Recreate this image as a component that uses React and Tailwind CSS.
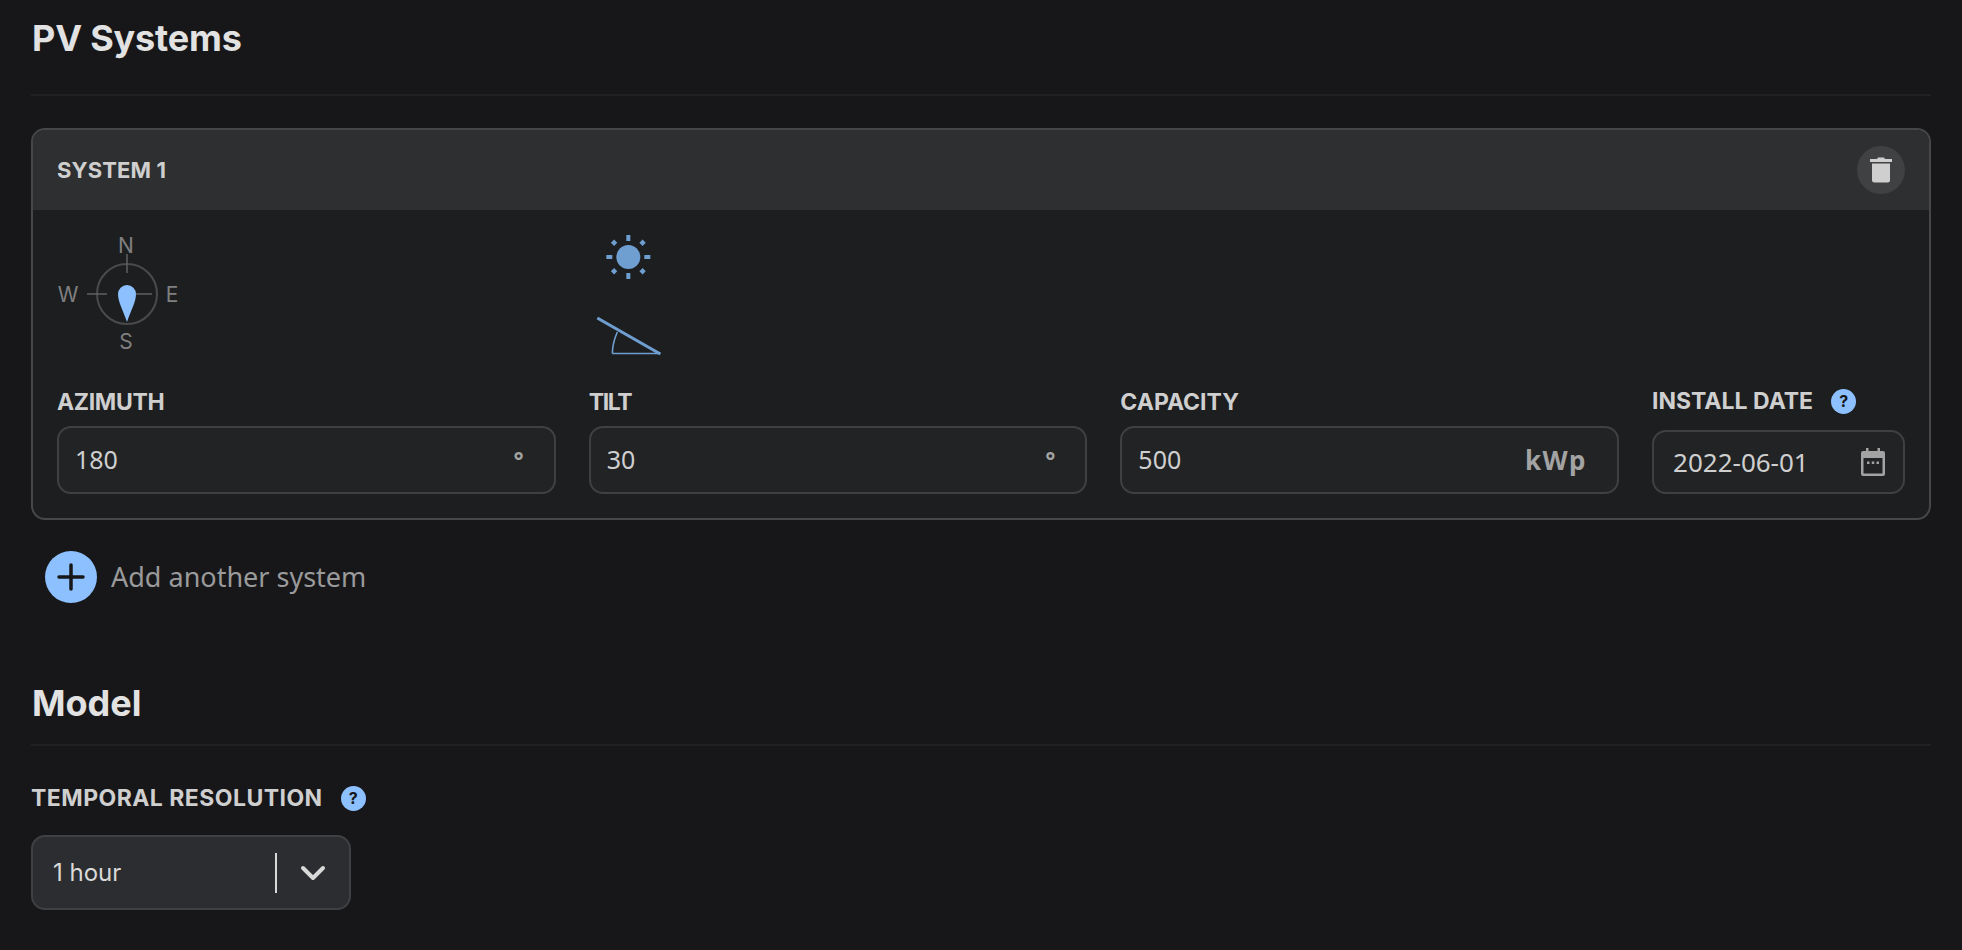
import React from "react";

const Help = () => (
  <span className="flex h-[25px] w-[25px] shrink-0 items-center justify-center rounded-full bg-[#8cc0ff] font-['Inter'] text-[16px] font-bold leading-none text-[#17171a]">?</span>
);

const Label = ({ children, className = "" }) => (
  <div className={"font-['Inter'] text-[23px] font-bold leading-[26px] text-[#cfcfcf] " + className}>{children}</div>
);

const Field = ({ label, labelClass, value, unit, unitClass }) => (
  <div className="flex min-w-0 flex-1 flex-col gap-[11px]">
    <Label className={labelClass}>{label}</Label>
    <div className="flex h-[68px] items-center rounded-[14px] border-2 border-[#3f4042] bg-[#222325] pl-[16px] pr-[30px]">
      <input readOnly value={value} className="min-w-0 flex-1 bg-transparent font-['Noto_Sans'] text-[25px] text-[#cfcfcf] outline-none" />
      <span className={unitClass}>{unit}</span>
    </div>
  </div>
);

const Compass = () => (
  <svg width="125" height="125" viewBox="0 0 125 125" className="mt-[2px] block">
    <g fontFamily="Inter, sans-serif" fontSize="21" fill="#808080" textAnchor="middle">
      <text x="69" y="19">N</text>
      <text x="69" y="115">S</text>
      <text x="11" y="68">W</text>
      <text x="115" y="68">E</text>
    </g>
    <circle cx="70" cy="60" r="30" fill="none" stroke="#4a4b4d" strokeWidth="2" />
    <g stroke="#5f6062" strokeWidth="1.5">
      <line x1="70" y1="20" x2="70" y2="39" />
      <line x1="30" y1="60" x2="50" y2="60" />
      <line x1="79" y1="60" x2="95" y2="60" />
    </g>
    <path d="M70 88 C66 76 61 68 61 60 A9 9 0 0 1 79 60 C79 68 74 76 70 88 Z" fill="#8cc0ff" />
  </svg>
);

const Sun = () => (
  <svg width="80" height="50" viewBox="0.67 0 80 50" className="block">
    <g fill="#6f9fd1">
      <circle cx="40" cy="25" r="12" />
      <rect x="38" y="3" width="4" height="6" />
      <rect x="38" y="41" width="4" height="6" />
      <rect x="18" y="23" width="6" height="4" />
      <rect x="56" y="23" width="6" height="4" />
      <rect x="23.5" y="8.5" width="4.5" height="4.5" transform="rotate(45 25.75 10.75)" />
      <rect x="52" y="8.5" width="4.5" height="4.5" transform="rotate(45 54.25 10.75)" />
      <rect x="23.5" y="37" width="4.5" height="4.5" transform="rotate(45 25.75 39.25)" />
      <rect x="52" y="37" width="4.5" height="4.5" transform="rotate(45 54.25 39.25)" />
    </g>
  </svg>
);

const Tilt = () => (
  <svg width="80" height="40" viewBox="0.67 0 80 40" className="block">
    <line x1="9" y1="2" x2="72" y2="38" stroke="#6f9fd1" strokeWidth="3" />
    <line x1="24" y1="37.5" x2="72" y2="37.5" stroke="#6f9fd1" strokeWidth="1.6" />
    <path d="M24 37.5 C24 30 26 23 29 16" fill="none" stroke="#6f9fd1" strokeWidth="1.6" />
  </svg>
);

const Trash = () => (
  <svg width="22" height="26" viewBox="0 0 22 26" fill="#cfcfcf">
    <path d="M8 0.5 h6 l1 1.5 h7 v3 H0 V2 h7 z" />
    <path d="M2 6.5 h18 V23 a2.5 2.5 0 0 1 -2.5 2.5 h-13 A2.5 2.5 0 0 1 2 23 z" />
  </svg>
);

const Calendar = () => (
  <svg width="24" height="28" viewBox="0 0 24 28" fill="#a3a3a3" className="shrink-0">
    <path fillRule="evenodd" d="M5 0 h2.5 v3 h9 V0 H19 v3 h3 a2 2 0 0 1 2 2 v21 a2 2 0 0 1 -2 2 H2 a2 2 0 0 1 -2 -2 V5 a2 2 0 0 1 2 -2 h3 z M2.5 10 v15.5 h19 V10 z" />
    <rect x="6" y="13.5" width="2.5" height="2.5" />
    <rect x="10.75" y="13.5" width="2.5" height="2.5" />
    <rect x="15.5" y="13.5" width="2.5" height="2.5" />
  </svg>
);

export default function App() {
  return (
    <div className="h-[950px] overflow-hidden bg-[#17171a] pl-[31px] pr-[31px]">
      <h2 className="h-[96px] border-b-2 border-[#212124] pl-px pt-[17px] font-['Inter'] text-[36px] font-bold leading-[42px] tracking-[-0.005em] text-[#e2e2e2]">PV Systems</h2>

      <div className="mt-[32px] overflow-hidden rounded-[14px] border-2 border-[#464749] bg-[#1d1e20]">
        <div className="flex h-[80px] items-center justify-between bg-[#2e2f31] pl-[24px] pr-[24px]">
          <span className="font-['Inter'] text-[22px] font-bold tracking-[0.005em] text-[#cfcfcf]">SYSTEM 1</span>
          <button className="flex h-[48px] w-[48px] items-center justify-center rounded-full bg-[#404143]"><Trash /></button>
        </div>
        <div className="px-[24px] pb-[24px]">
          <div className="flex h-[179px] gap-[33px] pt-[22px]">
            <div className="min-w-0 flex-1"><Compass /></div>
            <div className="min-w-0 flex-1">
              <Sun />
              <div className="mt-[34px]"><Tilt /></div>
            </div>
            <div className="min-w-0 flex-1" />
            <div className="w-[253px]" />
          </div>
          <div className="flex items-end gap-[33px]">
            <Field label="AZIMUTH" labelClass="tracking-[-0.015em]" value="180" unit="°" unitClass="font-['Noto_Sans'] text-[24px] font-bold text-[#a3a3a3]" />
            <Field label="TILT" labelClass="tracking-[-0.06em]" value="30" unit="°" unitClass="font-['Noto_Sans'] text-[24px] font-bold text-[#a3a3a3]" />
            <Field label="CAPACITY" value="500" unit="kWp" unitClass="font-['Noto_Sans'] text-[26px] font-bold tracking-[0.06em] text-[#a3a3a3]" />
            <div className="w-[253px]">
              <div className="flex h-[24px] items-center gap-[18px]">
                <Label>INSTALL DATE</Label>
                <Help />
              </div>
              <div className="mt-[17px] flex h-[64px] items-center rounded-[14px] border-2 border-[#3f4042] bg-[#222325] pl-[19px] pr-[18px]">
                <input readOnly value="2022-06-01" className="min-w-0 flex-1 bg-transparent font-['Noto_Sans'] text-[26px] text-[#cfcfcf] outline-none" />
                <Calendar />
              </div>
            </div>
          </div>
        </div>
      </div>

      <div className="mt-[31px] flex items-center gap-[14px] pl-[14px]">
        <span className="flex h-[52px] w-[52px] items-center justify-center rounded-full bg-[#8cc0ff]">
          <svg width="28" height="28" viewBox="0 0 28 28" stroke="#17171a" strokeWidth="3.5" strokeLinecap="round"><path d="M14 2 V26 M2 14 H26" /></svg>
        </span>
        <span className="font-['Noto_Sans'] text-[27px] leading-[36px] text-[#9a9a9a]">Add another system</span>
      </div>

      <h2 className="mt-[79px] border-b-2 border-[#212124] pb-[20px] pl-px font-['Inter'] text-[36px] font-bold leading-[42px] text-[#e2e2e2]">Model</h2>

      <div className="mt-[39px] flex items-center gap-[18px]">
        <Label className="tracking-[0.02em]">TEMPORAL RESOLUTION</Label>
        <Help />
      </div>
      <div className="mt-[24px] flex h-[75px] w-[320px] items-center rounded-[14px] border-2 border-[#3f4042] bg-[#2c2d30] pl-[20px]">
        <span className="flex-1 font-['Inter'] text-[24px] text-[#d9d9d9]">1 hour</span>
        <span className="h-[40px] w-[2px] bg-[#d9d9d9]" />
        <span className="flex w-[72px] justify-center">
          <svg width="26" height="16" viewBox="0 0 26 16" fill="none" stroke="#d9d9d9" strokeWidth="4" strokeLinecap="round" strokeLinejoin="round"><path d="M3 3 L13 13 L23 3" /></svg>
        </span>
      </div>
    </div>
  );
}
